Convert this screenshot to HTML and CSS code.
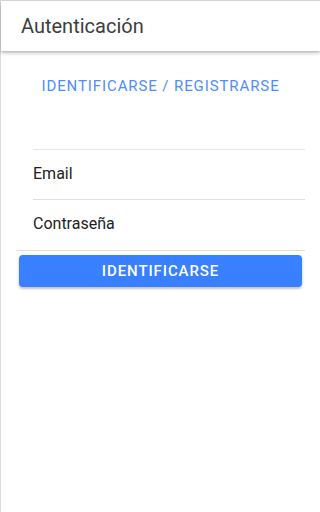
FILE: index.html
```html
<!DOCTYPE html>
<html lang="es">
<head>
<meta charset="utf-8">
<title>Autenticación</title>
<link rel="stylesheet" href="styles.css">
</head>
<body>
<div class="page">
  <header class="toolbar">
    <h1 class="title">Autenticación</h1>
  </header>
  <main class="content">
    <div class="segment">
      <span class="segment-label">IDENTIFICARSE / REGISTRARSE</span>
    </div>
    <form class="form">
      <div class="list">
        <div class="item item-first"><span class="item-label">Email</span></div>
        <div class="item"><span class="item-label">Contraseña</span></div>
      </div>
      <button type="button" class="btn">IDENTIFICARSE</button>
    </form>
  </main>
</div>
</body>
</html>
```
FILE: styles.css
```css
html, body {
  margin: 0;
  padding: 0;
  height: 100%;
  background: #fff;
}
.page {
  box-sizing: border-box;
  height: 100%;
  border-top: 1px solid #dcdcdc;
  border-left: 1px solid #dcdcdc;
  font-family: Roboto, "Noto Sans", sans-serif;
}
.toolbar {
  height: 50px;
  display: flex;
  align-items: center;
  padding-left: 20px;
  background: #fff;
  box-shadow: 0 2px 4px rgba(0,0,0,0.22), 0 1px 2px rgba(0,0,0,0.12);
  position: relative;
}
.title {
  margin: 0;
  font-size: 20px;
  font-weight: 400;
  color: #3d3d3d;
  letter-spacing: 0;
}
.content {
  padding: 0 15px;
}
.segment {
  display: flex;
  justify-content: center;
  padding-top: 25px;
  height: 33px;
}
.segment-label {
  font-size: 15px;
  font-weight: 400;
  letter-spacing: 0.06em;
  color: #4d8dff;
  line-height: 20px;
}
.form {
  margin-top: 40px;
}
.list {
  display: flex;
  flex-direction: column;
}
.item {
  height: 51px;
  border-bottom: 1px solid #dedede;
  display: flex;
  align-items: center;
  padding-left: 17px;
  padding-bottom: 3px;
  box-sizing: border-box;
}
.item-first {
  margin-left: 17px;
  padding-left: 0;
  border-top: 1px solid #e6e6e6;
  height: 51px;
}
.item-label {
  font-size: 16px;
  color: #222;
}
.btn {
  display: block;
  box-sizing: border-box;
  width: calc(100% - 6px);
  margin: 4px 3px 0 3px;
  height: 32px;
  border: 0;
  border-radius: 4px;
  background: #3880ff;
  color: #fff;
  font-family: Roboto, "Noto Sans", sans-serif;
  font-size: 15px;
  font-weight: 500;
  letter-spacing: 0.06em;
  box-shadow: 0 2px 2px rgba(0,0,0,0.16), 0 1px 4px rgba(0,0,0,0.12);
}
```
